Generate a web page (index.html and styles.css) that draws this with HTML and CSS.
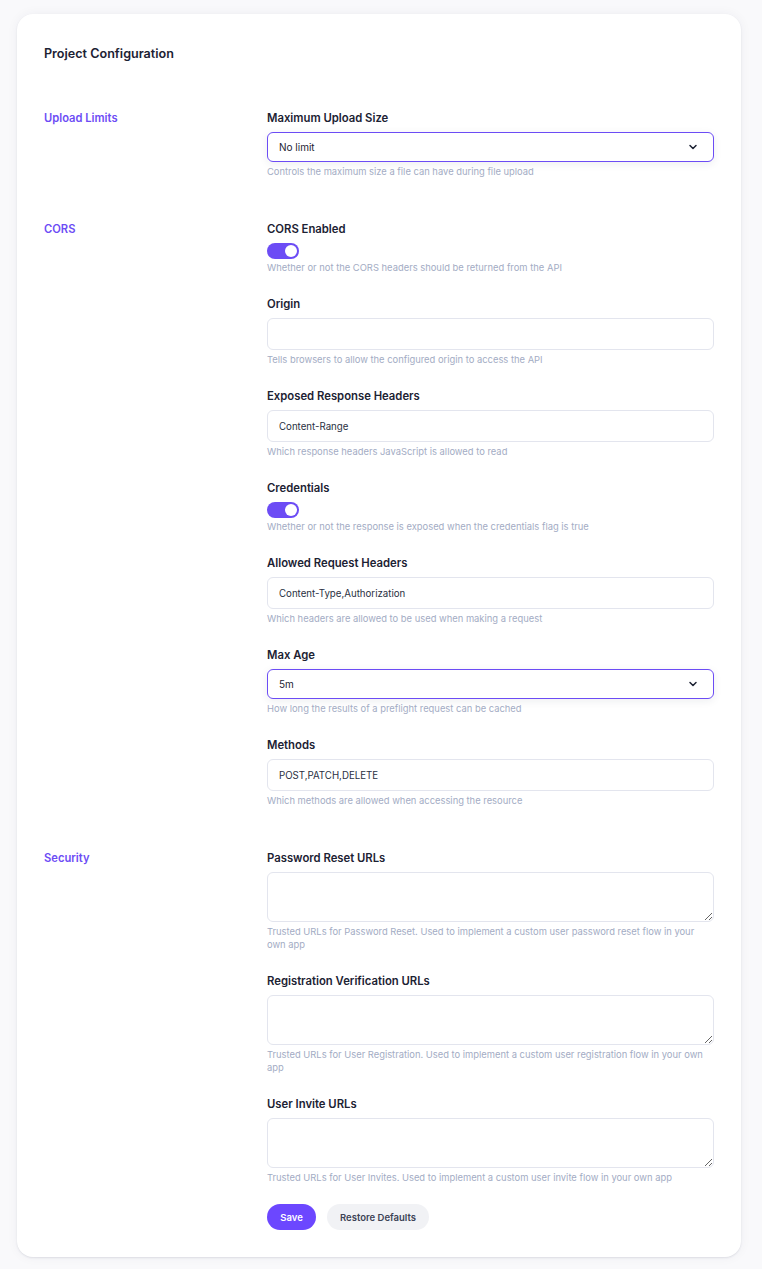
FILE: index.html
```html
<!DOCTYPE html>
<html lang="en">
<head>
  <meta charset="UTF-8">
  <meta name="viewport" content="width=device-width, initial-scale=1.0">
  <title>Project Configuration</title>
  <link rel="stylesheet" href="styles.css">
</head>
<body>
  <div class="card">
    <h1 class="title">Project Configuration</h1>

    <!-- upload limits -->
    <div class="section">
      <h2 class="section-name">Upload Limits</h2>
      <div class="fields">
        <div class="field">
          <label>Maximum Upload Size</label>
          <div class="select">
            <span>No limit</span>
            <svg width="10" height="10" viewBox="0 0 10 10"><path d="M2 3.5 L5 6.5 L8 3.5" fill="none" stroke="#1c2233" stroke-width="1.5" stroke-linecap="round" stroke-linejoin="round"/></svg>
          </div>
          <p class="help">Controls the maximum size a file can have during file upload</p>
        </div>
      </div>
    </div>

    <!-- cors -->
    <div class="section">
      <h2 class="section-name">CORS</h2>
      <div class="fields">
        <div class="field">
          <label>CORS Enabled</label>
          <div class="toggle on"><span class="knob"></span></div>
          <p class="help tight">Whether or not the CORS headers should be returned from the API</p>
        </div>
        <div class="field">
          <label>Origin</label>
          <input class="input" type="text" value="">
          <p class="help">Tells browsers to allow the configured origin to access the API</p>
        </div>
        <div class="field">
          <label>Exposed Response Headers</label>
          <input class="input" type="text" value="Content-Range">
          <p class="help">Which response headers JavaScript is allowed to read</p>
        </div>
        <div class="field">
          <label>Credentials</label>
          <div class="toggle on"><span class="knob"></span></div>
          <p class="help tight">Whether or not the response is exposed when the credentials flag is true</p>
        </div>
        <div class="field">
          <label>Allowed Request Headers</label>
          <input class="input" type="text" value="Content-Type,Authorization">
          <p class="help">Which headers are allowed to be used when making a request</p>
        </div>
        <div class="field">
          <label>Max Age</label>
          <div class="select">
            <span>5m</span>
            <svg width="10" height="10" viewBox="0 0 10 10"><path d="M2 3.5 L5 6.5 L8 3.5" fill="none" stroke="#1c2233" stroke-width="1.5" stroke-linecap="round" stroke-linejoin="round"/></svg>
          </div>
          <p class="help">How long the results of a preflight request can be cached</p>
        </div>
        <div class="field">
          <label>Methods</label>
          <input class="input" type="text" value="POST,PATCH,DELETE">
          <p class="help">Which methods are allowed when accessing the resource</p>
        </div>
      </div>
    </div>

    <!-- security -->
    <div class="section last">
      <h2 class="section-name">Security</h2>
      <div class="fields">
        <div class="field">
          <label>Password Reset URLs</label>
          <textarea class="textarea"></textarea>
          <p class="help">Trusted URLs for Password Reset. Used to implement a custom user password reset flow in your own app</p>
        </div>
        <div class="field">
          <label>Registration Verification URLs</label>
          <textarea class="textarea"></textarea>
          <p class="help">Trusted URLs for User Registration. Used to implement a custom user registration flow in your own app</p>
        </div>
        <div class="field">
          <label>User Invite URLs</label>
          <textarea class="textarea"></textarea>
          <p class="help">Trusted URLs for User Invites. Used to implement a custom user invite flow in your own app</p>
        </div>
        <div class="actions">
          <button class="btn save">Save</button>
          <button class="btn restore">Restore Defaults</button>
        </div>
      </div>
    </div>
  </div>
</body>
</html>
```

FILE: styles.css
```css
body {
  margin: 0;
  padding: 14px 21px 12px 17px;
  background: #f9f9fb;
  font-family: "Inter", "Liberation Sans", sans-serif;
  color: #1c2233;
}

.card {
  background: #fff;
  border-radius: 16px;
  padding: 32px 27px 27px 27px;
  box-shadow: 0 1px 2px rgba(30, 35, 70, 0.10), 0 0 12px rgba(30, 35, 70, 0.05);
}

.title {
  margin: 0 0 48px;
  font-size: 12.6px;
  line-height: 16px;
  font-weight: 600;
  color: #1c2233;
}

.section {
  display: grid;
  grid-template-columns: 223px 1fr;
  margin-bottom: 21px;
}

.section.last {
  margin-bottom: 0;
}

.section-name {
  margin: 0;
  font-size: 11.2px;
  line-height: 16px;
  font-weight: 600;
  color: #6c4cf5;
}

.field {
  margin-bottom: 22px;
}

.field label {
  display: block;
  font-size: 11.3px;
  line-height: 16px;
  font-weight: 600;
  color: #1c2233;
  margin-bottom: 6px;
}

.help {
  margin: 3px 0 0;
  font-size: 9.4px;
  line-height: 13px;
  color: #a3acc4;
}

.help.tight {
  margin-top: 2px;
}

.input, .select, .textarea {
  box-sizing: border-box;
  width: 100%;
  border: 1px solid #e3e5ee;
  border-radius: 6px;
  background: #fff;
  font-family: "Inter", "Liberation Sans", sans-serif;
  font-size: 9.7px;
  color: #2a3042;
}

.input {
  display: block;
  height: 32px;
  padding: 0 11px;
  outline: none;
}

.textarea {
  display: block;
  height: 50px;
  padding: 8px 11px;
  resize: vertical;
  outline: none;
}

.select {
  height: 30px;
  display: flex;
  align-items: center;
  justify-content: space-between;
  padding: 0 15px 0 11px;
  border-color: #6c4cf5;
  color: #1c2233;
  font-size: 10px;
  box-shadow: 0 2px 8px rgba(30, 35, 70, 0.08);
}

.toggle {
  width: 32px;
  height: 16px;
  border-radius: 8px;
  background: #d8dbe5;
  display: flex;
  align-items: center;
  padding: 0 2px;
  box-sizing: border-box;
}

.toggle.on {
  background: #6c4cf5;
  justify-content: flex-end;
}

.knob {
  width: 12px;
  height: 12px;
  border-radius: 50%;
  background: #fff;
}

.actions {
  display: flex;
  gap: 11px;
  margin-top: -2px;
}

.btn {
  height: 26px;
  border: none;
  border-radius: 13px;
  font-family: "Inter", "Liberation Sans", sans-serif;
  font-size: 9.5px;
  font-weight: 600;
  cursor: pointer;
}

.save {
  width: 49px;
  background: #6c47ff;
  color: #fff;
}

.restore {
  width: 102px;
  background: #f1f2f5;
  color: #3d4356;
}
```
